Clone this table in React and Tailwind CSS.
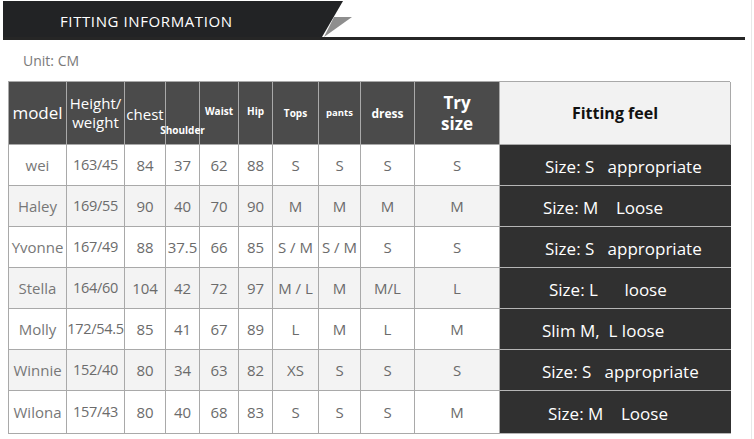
import React from "react";

const rows = [
  ["wei", "163/45", "84", "37", "62", "88", "S", "S", "S", "S", "Size: S   appropriate", 45],
  ["Haley", "169/55", "90", "40", "70", "90", "M", "M", "M", "M", "Size: M    Loose", 43],
  ["Yvonne", "167/49", "88", "37.5", "66", "85", "S / M", "S / M", "S", "S", "Size: S   appropriate", 45],
  ["Stella", "164/60", "104", "42", "72", "97", "M / L", "M", "M/L", "L", "Size: L      loose", 49],
  ["Molly", "172/54.5", "85", "41", "67", "89", "L", "M", "L", "M", "Slim M,  L loose", 42],
  ["Winnie", "152/40", "80", "34", "63", "82", "XS", "S", "S", "S", "Size: S   appropriate", 42],
  ["Wilona", "157/43", "80", "40", "68", "83", "S", "S", "S", "M", "Size: M    Loose", 48],
];

const font = { fontFamily: '"Open Sans", "Liberation Sans", sans-serif' };

function HeadCell({ children, className = "" }) {
  return (
    <div
      className={
        "relative flex items-center justify-center border-r border-b border-[#a9a9a9] bg-[#4b4b4b] text-white text-center leading-tight " +
        className
      }
    >
      {children}
    </div>
  );
}

export default function App() {
  return (
    <div className="relative w-[754px] h-[439px] bg-white overflow-hidden" style={font}>
      {/* Banner */}
      <div className="relative h-[41px]">
        <svg className="absolute left-0 top-0" width="754" height="41" viewBox="0 0 754 41">
          <polygon points="3,1 343,1 322,37 3,37" fill="#222325" />
          <rect x="3" y="37" width="742" height="3" fill="#262626" />
          <polygon points="334,17 352,17 324,37" fill="#8e8e8e" />
        </svg>
        <div className="absolute left-[60px] top-[10px] text-white text-[15px] leading-[22px] tracking-[0.6px]">
          FITTING INFORMATION
        </div>
      </div>
      <div className="pl-[23px] pt-[10px] h-[40px] text-[14px] leading-[20px] text-[#7a7a7a]">Unit: CM</div>

      {/* Table */}
      <div className="ml-[8px] grid grid-cols-[58px_58px_41px_34px_39px_34px_46px_42px_54px_85px_231px] border-l border-t border-[#a9a9a9] w-[722px]">
        <HeadCell className="h-[63px] text-[17px]">model</HeadCell>
        <HeadCell className="text-[15px] leading-[18px] flex-col">
          <span>Height/</span>
          <span>weight</span>
        </HeadCell>
        <HeadCell className="text-[15px]">
          <span className="mt-[2px]">chest</span>
        </HeadCell>
        <HeadCell className="items-end z-10">
          <span className="whitespace-nowrap font-bold text-[10px] mb-[8px]">Shoulder</span>
        </HeadCell>
        <HeadCell className="text-[10px] font-bold">
          <span className="-mt-[4px]">Waist</span>
        </HeadCell>
        <HeadCell className="text-[10px] font-bold">
          <span className="-mt-[4px]">Hip</span>
        </HeadCell>
        <HeadCell className="text-[10px] font-bold">Tops</HeadCell>
        <HeadCell className="text-[9.5px] font-bold">pants</HeadCell>
        <HeadCell className="text-[12px] font-bold">dress</HeadCell>
        <HeadCell className="text-[17px] font-bold leading-[21px] flex-col">
          <span>Try</span>
          <span>size</span>
        </HeadCell>
        <div className="flex items-center justify-center border-r border-b border-[#a9a9a9] bg-[#f2f2f2] text-[#111] text-[16px] font-bold">
          Fitting feel
        </div>

        {rows.map((r, i) => {
          const bg = i % 2 === 1 ? "bg-[#f3f3f3]" : "bg-white";
          const h = i === rows.length - 1 ? "h-[43px]" : "h-[41px]";
          return (
            <React.Fragment key={r[0]}>
              {r.slice(0, 10).map((c, j) => (
                <div
                  key={j}
                  className={
                    "flex items-center justify-center whitespace-nowrap border-r border-b border-[#a9a9a9] text-[#6b6b6b] " +
                    (j === 1 ? "text-[14.5px] tracking-[-0.3px] " : "text-[15px] ") +
                    (j === 0 ? "text-[#777] " : "") +
                    bg +
                    " " +
                    h
                  }
                >
                  {c}
                </div>
              ))}
              <div
                className={
                  "flex items-center whitespace-pre bg-[#303030] text-white text-[17px] border-b border-[#b5b5b5] " + h
                }
                style={{ paddingLeft: r[11] }}
              >
                <span className="mt-[3px]">{r[10]}</span>
              </div>
            </React.Fragment>
          );
        })}
      </div>

      <div className="absolute right-[2px] top-0 h-[439px] w-px bg-[#e8e8e8]" />
    </div>
  );
}
